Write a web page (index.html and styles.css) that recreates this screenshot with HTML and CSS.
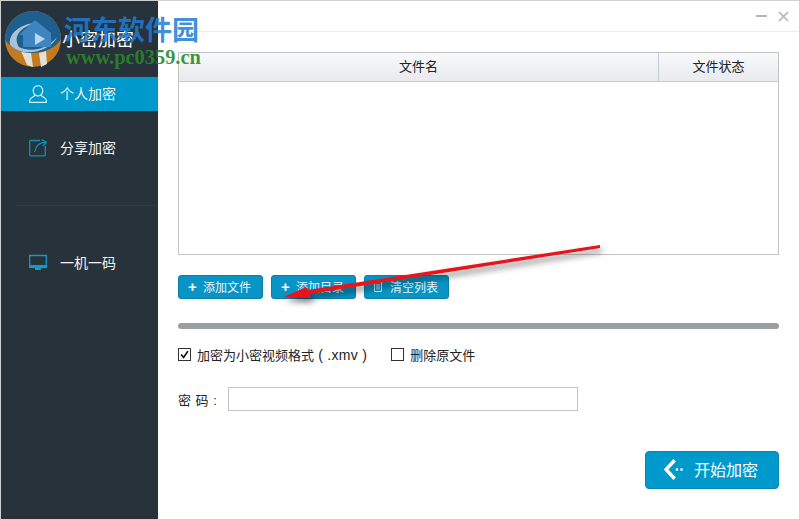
FILE: index.html
```html
<!DOCTYPE html>
<html lang="zh-CN">
<head>
    <meta charset="UTF-8">
    <title>小密加密</title>
    <link rel="stylesheet" href="styles.css">
</head>
<body>
    <div class="window">
        <aside class="sidebar">
            <div class="brand">小密加密</div>
            <div class="nav-item active">
                <svg class="nav-icon" viewBox="0 0 18 18" fill="none" stroke="#d8f0f8" stroke-width="1.2">
                    <ellipse cx="9" cy="5.800" rx="4.800" ry="5.200"/>
                    <path d="M6 10 C5 12 1 13 .7 15 V17.400 H17.300 V15 C17 13 13 12 12 10"/>
                </svg>
                <span>个人加密</span>
            </div>
            <div class="nav-item share">
                <svg class="nav-icon" viewBox="0 0 18 18" fill="none" stroke="#0f8ebc" stroke-width="1.300">
                    <path d="M11 1.500 H1.500 Q.7 1.500 .7 2.300 V16 Q.7 16.800 1.500 16.800 H15.500 Q16.300 16.800 16.300 16 V7"/>
                    <path d="M5.700 13 C6.500 8 10 3.500 17 3.200 M12.500 .5 L17.300 3.200 L14 7"/>
                </svg>
                <span>分享加密</span>
            </div>
            <div class="nav-rule"></div>
            <div class="nav-item device">
                <svg class="nav-icon" viewBox="0 0 18 18" fill="none">
                    <path d="M.7 1.500 H17.300 V12 H.7 Z" stroke="#0f9ccc" stroke-width="1.300"/>
                    <path d="M0 11 H18 V14 H0 Z M6 14 H12 V16 H6 Z" fill="#0f9ccc"/>
                </svg>
                <span>一机一码</span>
            </div>
        </aside>

        <main class="main">
            <div class="titlebar">
                <span class="win-min"></span>
                <svg class="win-close" viewBox="0 0 11 11" stroke="#b4b4b4" stroke-width="1.600">
                    <path d="M1 1 L10 10 M10 1 L1 10"/>
                </svg>
            </div>

            <div class="content">
                <div class="file-table">
                    <div class="table-head">
                        <div class="col-name">文件名</div>
                        <div class="col-status">文件状态</div>
                    </div>
                    <div class="table-body"></div>
                </div>

                <div class="actions">
                    <button class="btn"><span class="plus">+</span>添加文件</button>
                    <button class="btn"><span class="plus">+</span>添加目录</button>
                    <button class="btn">
                        <svg class="trash" viewBox="0 0 10 11" fill="none" stroke="#cfeaf4" stroke-width="1">
                            <path d="M0 1 H10 M1.500 1 V10.500 H8.500 V1 M4 3 V8.500 M6 3 V8.500"/>
                        </svg>
                        清空列表
                    </button>
                </div>

                <div class="progress"></div>

                <div class="options">
                    <label class="option first">
                        <span class="checkbox">
                            <svg viewBox="0 0 13 13" fill="none" stroke="#111" stroke-width="2"><path d="M2.500 6.500 L5.500 10 L10.500 2.500"/></svg>
                        </span>
                        <span>加密为小密视频格式<span class="ext"> ( .xmv )</span></span>
                    </label>
                    <label class="option">
                        <span class="checkbox"></span>
                        删除原文件
                    </label>
                </div>

                <div class="password-row">
                    <label class="password-label">密 码 :</label>
                    <div class="password-input"></div>
                </div>

                <div class="footer">
                    <button class="btn-start">
                        <svg class="start-icon" viewBox="0 0 18 20" fill="none" stroke="#fff">
                            <path d="M10 2 L2.500 10 L10 18" stroke-width="3"/>
                            <path d="M12 9 V11 M16 9 V11" stroke-width="2"/>
                        </svg>
                        开始加密
                    </button>
                </div>
            </div>
        </main>
    </div>

    <!-- site watermark pasted over the screenshot -->
    <svg class="wm-logo" viewBox="0 0 56 56">
        <circle cx="28" cy="28" r="28" fill="#c47a1e"/>
        <path d="M16 40 L22 54 L28 56 L26 42 Z M34 42 L36 56 L42 53 L41 40 Z" fill="#e4e0d8"/>
        <path d="M0 28 A28 28 0 0 1 56 28 C50 38 38 42 26 42 C14 42 4 36 0 28 Z" fill="#1f5f8f"/>
        <path d="M5 34 C3 22 16 13 30 12 C14 17 8 26 14 36 C26 42 42 38 52 26 C46 40 18 48 5 34 Z" fill="#a8c2d6"/>
        <path d="M14 24 L30 9 L46 22 V36 H18 V24 Z" fill="#3f85c0"/>
        <path d="M30 22 L40 28 L30 34 Z" fill="#bcd6ea"/>
    </svg>
    <div class="wm-title">河东软件园</div>
    <div class="wm-url">www.pc0359.cn</div>

    <svg class="arrow" viewBox="0 0 800 520">
        <path d="M600 245 L308 290 L306 287 L284 297 L311 298 L310 294 L600 248 Z" fill="#e8141c"/>
    </svg>
</body>
</html>
```
FILE: styles.css
```css
* {
    box-sizing: border-box;
}
body {
    margin: 0;
    width: 800px;
    height: 520px;
    overflow: hidden;
    position: relative;
    font-family: "Liberation Sans", "Noto Sans CJK SC", sans-serif;
    font-size: 13px;
    color: #222;
    background-color: #fff;
}
.window {
    display: flex;
    height: 520px;
    border: 1px solid #d0d0d0;
}
.sidebar {
    width: 157px;
    flex-shrink: 0;
    background-color: #28323a;
    color: #f2f2f2;
}
.brand {
    height: 76px;
    padding: 27px 0 0 61px;
    font-size: 18px;
    line-height: 24px;
    color: #fff;
}
.nav-item {
    display: flex;
    align-items: center;
    height: 34px;
    padding-left: 28px;
    font-size: 14px;
}
.nav-item span {
    margin: 0 0 2px 13px;
}
.nav-item.active {
    background-color: #0099cc;
}
.nav-item.share {
    margin-top: 20px;
}
.nav-item.device {
    margin-top: 40px;
}
.nav-icon {
    width: 18px;
    height: 18px;
    flex-shrink: 0;
}
.nav-rule {
    height: 1px;
    margin: 40px 0 0 15px;
    background-color: #2f3a43;
}
.main {
    flex: 1;
    display: flex;
    flex-direction: column;
    min-width: 0;
}
.titlebar {
    height: 31px;
    flex-shrink: 0;
    display: flex;
    align-items: center;
    justify-content: flex-end;
    padding: 0 10px 0 0;
    gap: 11px;
    border-bottom: 1px solid #ececec;
}
.win-min {
    width: 11px;
    height: 2px;
    background-color: #b4b4b4;
}
.win-close {
    width: 11px;
    height: 11px;
}
.content {
    flex: 1;
    padding: 20px 20px 0 20px;
}
.file-table {
    height: 203px;
    border: 1px solid #c4c4c4;
}
.table-head {
    display: flex;
    height: 29px;
    line-height: 28px;
    text-align: center;
    background: linear-gradient(#f8f9fa, #e8eaed);
    border-bottom: 1px solid #c8ccd0;
}
.col-name {
    flex: 1;
    border-right: 1px solid #c2ccd4;
}
.col-status {
    width: 119px;
}
.actions {
    display: flex;
    gap: 8px;
    margin-top: 20px;
}
.btn {
    display: flex;
    align-items: center;
    justify-content: center;
    width: 85px;
    height: 24px;
    padding: 0 2px 1px 0;
    font-family: inherit;
    font-size: 12px;
    color: #e8f6fb;
    background-color: #0895c6;
    border: 1px solid #0a80a8;
    border-radius: 3px;
}
.plus {
    font-size: 15px;
    font-weight: bold;
    margin-right: 6px;
    color: #fff;
}
.trash {
    width: 10px;
    height: 11px;
    margin-right: 7px;
}
.progress {
    height: 6px;
    margin-top: 24px;
    background-color: #9a9fa3;
    border-radius: 3px;
}
.options {
    display: flex;
    align-items: center;
    margin-top: 18px;
    height: 15px;
}
.option {
    display: flex;
    align-items: center;
    gap: 6px;
}
.option.first {
    margin-right: 24px;
}
.ext {
    font-size: 14px;
    letter-spacing: 0.3px;
}
.checkbox {
    width: 13px;
    height: 13px;
    border: 1px solid #333;
    background-color: #fff;
    display: block;
}
.checkbox svg {
    display: block;
    width: 11px;
    height: 11px;
}
.password-row {
    display: flex;
    align-items: center;
    margin-top: 25px;
}
.password-label {
    width: 50px;
    word-spacing: 1px;
}
.password-input {
    width: 350px;
    height: 24px;
    border: 1px solid #c4c4c4;
}
.footer {
    display: flex;
    justify-content: flex-end;
    margin-top: 40px;
}
.btn-start {
    display: flex;
    align-items: center;
    width: 134px;
    height: 38px;
    padding: 0 0 2px 17px;
    font-family: inherit;
    font-size: 16px;
    color: #fff;
    background-color: #0099cc;
    border: 1px solid #0a86b0;
    border-radius: 4px;
}
.start-icon {
    width: 21px;
    height: 23px;
    margin-right: 10px;
}
/* overlays: watermark and annotation arrow */
.wm-logo {
    position: absolute;
    left: 5px;
    top: 11px;
    width: 56px;
    height: 56px;
}
.wm-title {
    position: absolute;
    left: 64px;
    top: 12px;
    font-family: "Noto Sans CJK SC", sans-serif;
    font-size: 27px;
    line-height: 34px;
    font-weight: bold;
    color: rgba(30, 125, 215, 0.85);
}
.wm-url {
    position: absolute;
    left: 66px;
    top: 47px;
    font-family: "Liberation Serif", serif;
    font-size: 20.400px;
    line-height: 20px;
    font-weight: bold;
    color: rgba(40, 135, 40, 0.9);
}
.arrow {
    position: absolute;
    left: 0;
    top: 0;
    width: 800px;
    height: 520px;
    filter: drop-shadow(2px 4px 3px rgba(0, 0, 0, 0.55));
}
```
